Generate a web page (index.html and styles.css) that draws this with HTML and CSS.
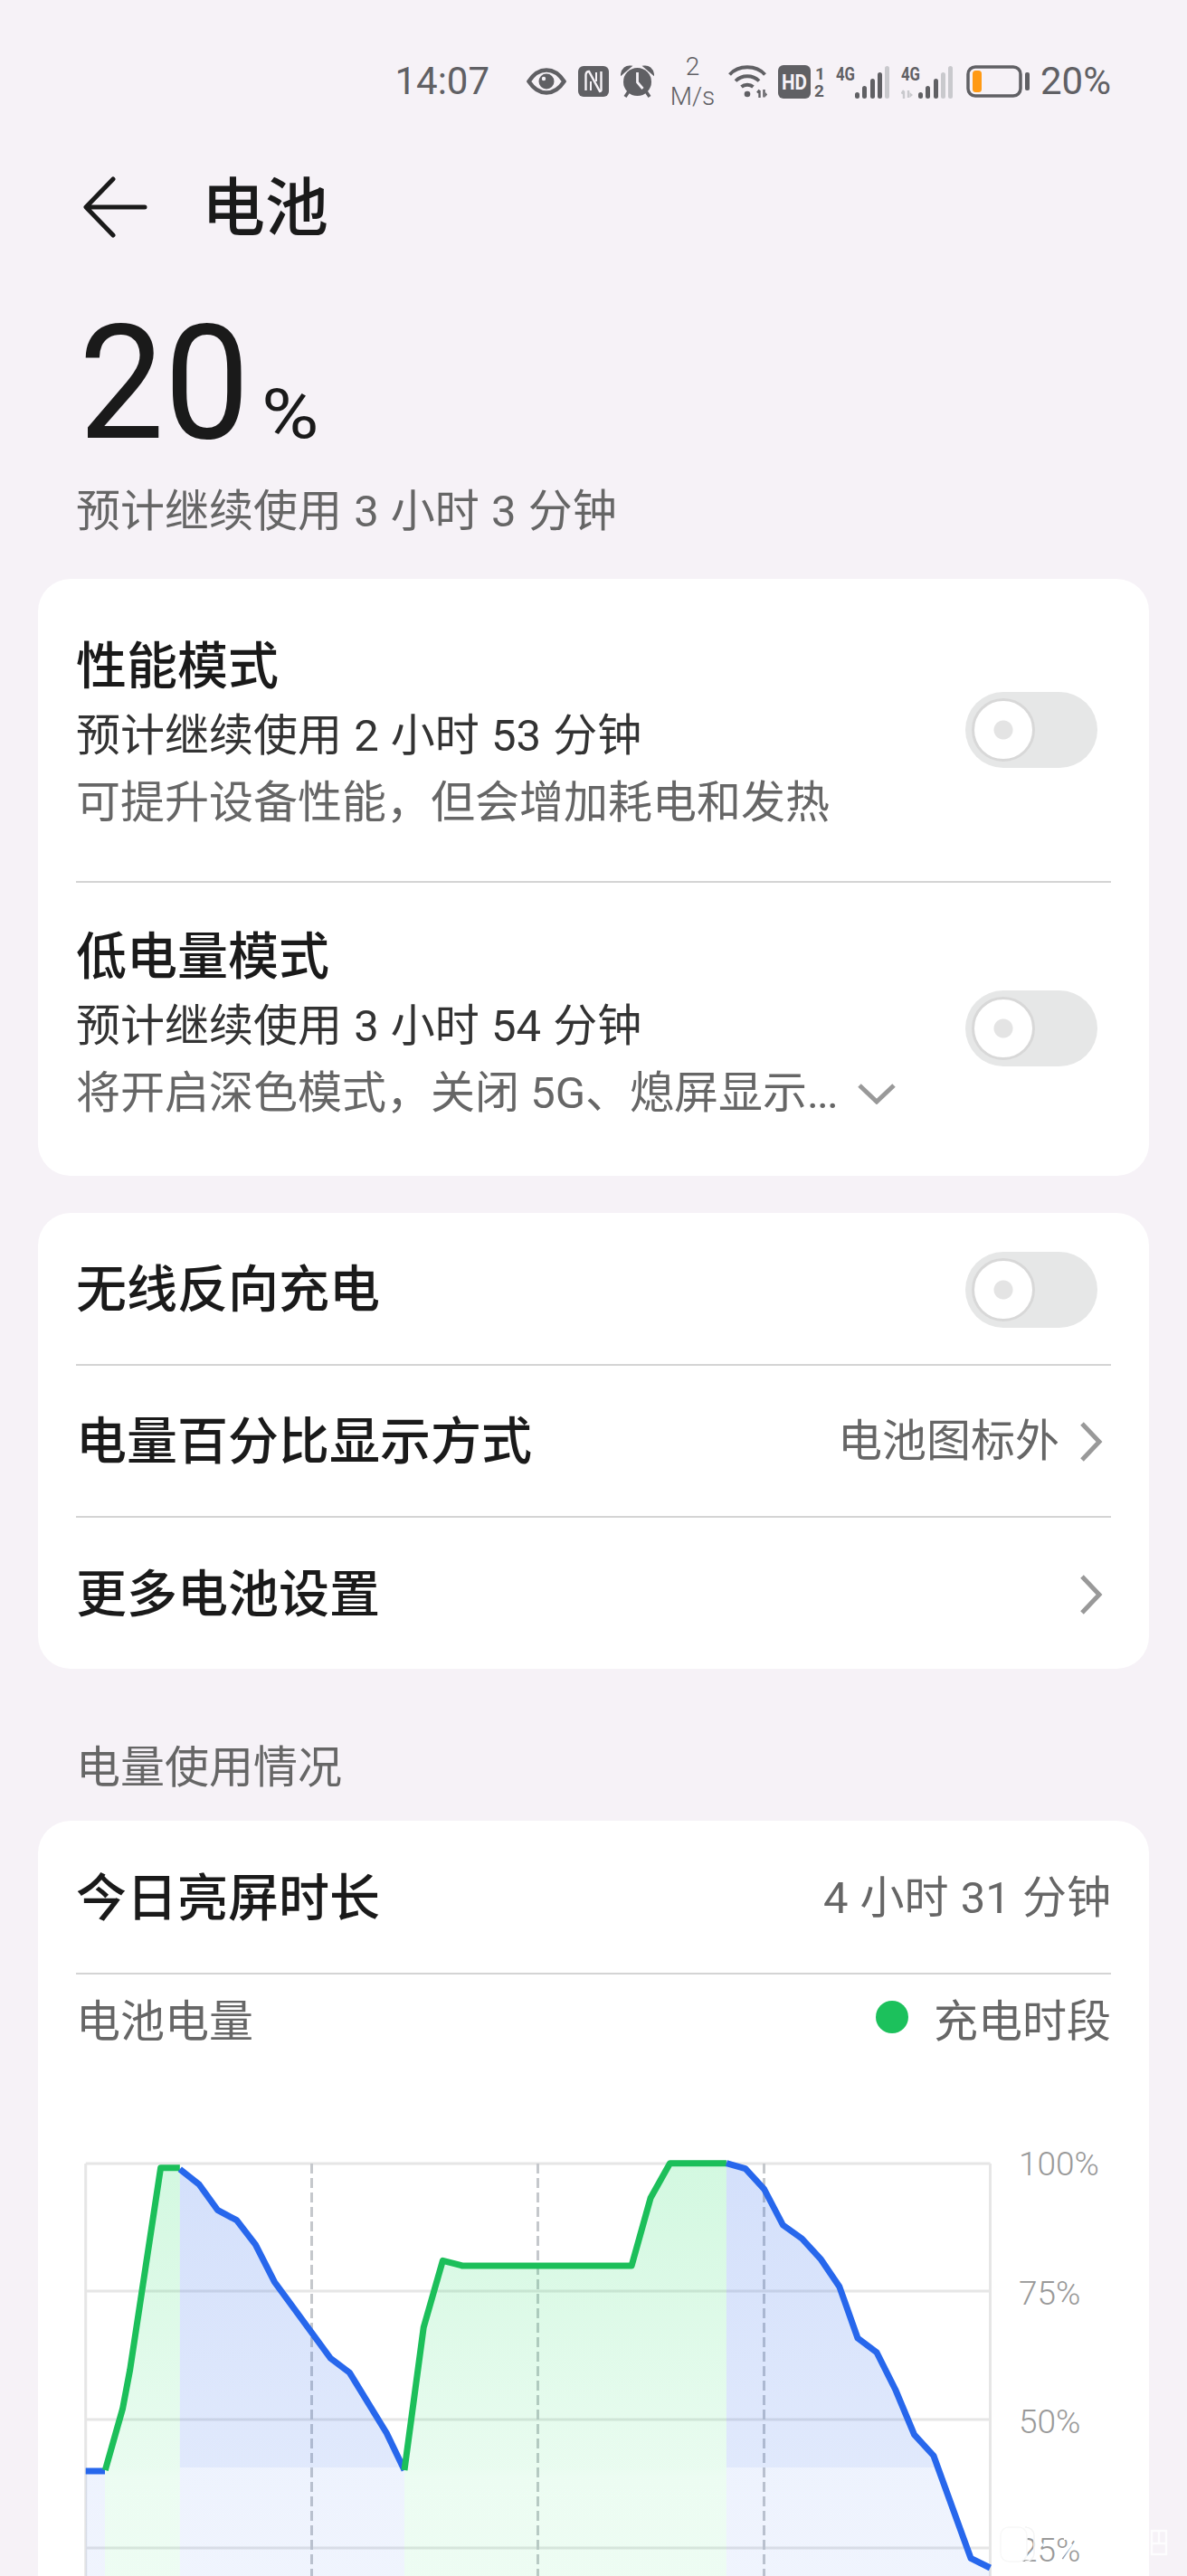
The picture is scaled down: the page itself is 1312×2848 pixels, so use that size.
FILE: index.html
```html
<!DOCTYPE html>
<html lang="zh-CN">
<head>
<meta charset="utf-8">
<title>电池</title>
<link rel="stylesheet" href="styles.css">
</head>
<body>
<div class="page">
  <div class="status">
    <span class="time">14:07</span>
    <svg class="ic gap-time" width="44" height="38" viewBox="0 0 44 38"><path d="M2.500 19C8 10.500 14 6.500 22 6.500S36 10.500 41.500 19C36 27.500 30 31.500 22 31.500S8 27.500 2.500 19Z" fill="none" stroke="#606064" stroke-width="4.500"/><circle cx="22" cy="19" r="8.500" fill="#606064"/><circle cx="19" cy="16" r="2.200" fill="#f6f2f7"/></svg>
    <svg class="ic gap-one" width="34" height="34" viewBox="0 0 34 34"><rect width="34" height="34" rx="6" fill="#606064"/><path d="M8.500 27V10C8.500 7 10 6 12 6L24 28C26 28 25.500 26 25.500 24V6" fill="none" stroke="#f6f2f7" stroke-width="2.400"/><path d="M14 27V17M20 7V17" fill="none" stroke="#f6f2f7" stroke-width="2"/></svg>
    <svg class="ic gap-one" width="37" height="36" viewBox="0 0 37 36"><path d="M1 10C2 4 6 1 11 1.500ZM36 10C35 4 31 1 26 1.500Z" fill="#606064" stroke="#606064" stroke-width="2"/><path d="M9 29L5 35M28 29L32 35" stroke="#606064" stroke-width="3.500" fill="none"/><circle cx="18.500" cy="18.500" r="15.500" fill="#606064"/><path d="M18.500 8V19L24.500 26" stroke="#f6f2f7" stroke-width="2.800" fill="none"/></svg>
    <div class="speed gap-speed"><span>2</span><span>M/s</span></div>
    <svg class="ic gap-wifi" width="43" height="38" viewBox="0 0 43 38"><path d="M1.500 11.500C11 .5 31 .5 40.500 11.500M8 18.500C15 11.500 27 11.500 34 18.500M14.500 25C18 22 24 22 27.500 25" fill="none" stroke="#606064" stroke-width="3.800"/><circle cx="21" cy="33" r="3.300" fill="#606064"/><path d="M34.500 37V29M32 31.500L34.500 28.500M39.500 28V36.500" stroke="#606064" stroke-width="2.400" fill="none"/><path d="M41 31L43 33.500L41 36Z" fill="#606064"/></svg>
    <svg class="ic" width="54" height="42" viewBox="0 0 54 42"><rect y="3" width="36" height="37" rx="6" fill="#606064"/><text x="18" y="30" class="hd" textLength="28" lengthAdjust="spacingAndGlyphs">HD</text><text x="41" y="19" class="tiny">1</text><text x="40" y="38" class="tiny">2</text></svg>
    <svg class="ic gap-sim" width="60" height="38" viewBox="0 0 60 38"><text x="0" y="18" class="g4" textLength="21" lengthAdjust="spacingAndGlyphs">4G</text><g fill="#606064"><rect x="21" y="31" width="5" height="7" rx="2.500"/><rect x="29" y="24" width="5" height="14" rx="2.500"/><rect x="38" y="16" width="5" height="22" rx="2.500"/><rect x="46" y="9" width="5" height="29" rx="2.500"/></g><rect x="54" y="2" width="5" height="36" rx="2.500" fill="#c9c9cd"/></svg>
    <svg class="ic" width="60" height="38" viewBox="0 0 60 38"><text x="0" y="18" class="g4" textLength="21" lengthAdjust="spacingAndGlyphs">4G</text><path d="M3 38V30M.5 32.500L3 29M8 29V37" stroke="#c9c9cd" stroke-width="2.400" fill="none"/><path d="M9.500 31L13 34L9.500 37Z" fill="#c9c9cd"/><g fill="#606064"><rect x="19" y="31" width="5" height="7" rx="2.500"/><rect x="27" y="24" width="5" height="14" rx="2.500"/><rect x="36" y="16" width="5" height="22" rx="2.500"/></g><rect x="44" y="9" width="5" height="29" rx="2.500" fill="#c9c9cd"/><rect x="52" y="2" width="5" height="36" rx="2.500" fill="#c9c9cd"/></svg>
    <svg class="ic" width="70" height="36" viewBox="0 0 70 36"><rect x="2" y="2" width="58" height="32" rx="8" fill="none" stroke="#606064" stroke-width="3.500"/><rect x="7" y="6" width="10" height="24" rx="3.500" fill="#ff9a14"/><rect x="65" y="8" width="5" height="20" rx="2" fill="#606064"/></svg>
    <span class="pct">20%</span>
  </div>

  <div class="appbar">
    <svg class="back" width="72" height="68" viewBox="0 0 72 68"><path d="M34 3L4 34L34 65M5 34H69" fill="none" stroke="#1a1a1a" stroke-width="5" stroke-linecap="round" stroke-linejoin="round"/></svg>
    <h1 class="title">电池</h1>
  </div>

  <div class="hero">
    <div class="level"><span class="level-num">20</span><span class="level-unit">%</span></div>
    <p class="hero-sub">预计继续使用 3 小时 3 分钟</p>
  </div>

  <section class="card card-modes">
    <div class="mode">
      <div class="mode-text">
        <div class="mode-title">性能模式</div>
        <div class="mode-time">预计继续使用 2 小时 53 分钟</div>
        <div class="mode-note">可提升设备性能，但会增加耗电和发热</div>
      </div>
      <div class="toggle toggle-a"><span class="thumb"></span></div>
    </div>
    <div class="mode mode-last">
      <div class="mode-text">
        <div class="mode-title">低电量模式</div>
        <div class="mode-time">预计继续使用 3 小时 54 分钟</div>
        <div class="mode-note"><span>将开启深色模式，关闭 5G、熄屏显示<span class="dots">...</span></span><svg class="down" width="44" height="24" viewBox="0 0 44 24"><path d="M3 3L22 21L41 3" fill="none" stroke="#999" stroke-width="5"/></svg></div>
      </div>
      <div class="toggle toggle-b"><span class="thumb"></span></div>
    </div>
  </section>

  <section class="card card-settings">
    <div class="row">
      <span class="row-label">无线反向充电</span>
      <div class="toggle"><span class="thumb"></span></div>
    </div>
    <div class="row">
      <span class="row-label">电量百分比显示方式</span>
      <span class="row-end"><span class="row-value">电池图标外</span><svg class="chev" width="26" height="46" viewBox="0 0 26 46"><path d="M3 3L22 23L3 43" fill="none" stroke="#999" stroke-width="5"/></svg></span>
    </div>
    <div class="row">
      <span class="row-label">更多电池设置</span>
      <svg class="chev" width="26" height="46" viewBox="0 0 26 46"><path d="M3 3L22 23L3 43" fill="none" stroke="#999" stroke-width="5"/></svg>
    </div>
  </section>

  <h2 class="section">电量使用情况</h2>

  <section class="card card-usage">
    <div class="usage-head">
      <span class="row-label">今日亮屏时长</span>
      <span class="row-value">4 小时 31 分钟</span>
    </div>
    <div class="usage-legend">
      <span class="legend-name">电池电量</span>
      <span class="legend-key"><i class="dot"></i>充电时段</span>
    </div>
    <svg class="chart" width="1228" height="468" viewBox="42 2380 1228 468">
      <defs>
        <linearGradient id="fb" gradientUnits="userSpaceOnUse" x1="0" y1="2392" x2="0" y2="2848">
          <stop offset="0" stop-color="#2563eb" stop-opacity=".2"/>
          <stop offset=".737" stop-color="#2563eb" stop-opacity=".14"/>
          <stop offset=".737" stop-color="#2563eb" stop-opacity=".08"/>
          <stop offset="1" stop-color="#2563eb" stop-opacity=".07"/>
        </linearGradient>
        <linearGradient id="fg" gradientUnits="userSpaceOnUse" x1="0" y1="2392" x2="0" y2="2848">
          <stop offset="0" stop-color="#22dd66" stop-opacity=".2"/>
          <stop offset=".737" stop-color="#22dd66" stop-opacity=".1"/>
          <stop offset=".76" stop-color="#22dd66" stop-opacity=".085"/>
          <stop offset="1" stop-color="#22dd66" stop-opacity=".08"/>
        </linearGradient>
      </defs>
      <g class="grid">
        <path d="M94.700 2392H1094.500M94.700 2533H1094.500M94.700 2675H1094.500M94.700 2817H1094.500M94.700 2392V2848M1094.500 2392V2848"/>
      </g>
      <path class="dash" d="M344.500 2392V2848M594.500 2392V2848M844.500 2392V2848"/>
      <path fill="url(#fb)" d="M94.700 2732H116V2848H94.700Z"/>
      <path fill="url(#fg)" d="M116 2732L135.500 2663.300L143.700 2620L177.600 2396.700H198.800V2848H116Z"/>
      <path fill="url(#fb)" d="M198.800 2396.700L220 2415L240.400 2443.300L261.600 2454.700L282.400 2481.700L303.300 2522.700L365.300 2607.300L386.500 2623.300L427.300 2690L447 2731V2848H198.800Z"/>
      <path fill="url(#fg)" d="M447 2731L468.200 2573.300L489.400 2499.300L511 2505H698.100L719.100 2430L740.500 2391.700H802.900V2848H447Z"/>
      <path fill="url(#fb)" d="M802.900 2391.700L823.900 2397.700L844.500 2420L865.400 2460L886.400 2475L906.900 2497.300L927.900 2528.300L948 2585L969 2600.700L989.600 2641.700L1010.500 2691.700L1031.900 2715L1073 2828.300L1094.400 2839V2848H802.900Z"/>
      <path class="line-b" d="M94.700 2732H116"/>
      <path class="line-g" d="M116.300 2731L135.500 2663.300L143.700 2620L177.600 2396.700H198.800"/>
      <path class="line-b" d="M198.800 2398.300L220 2415L240.400 2443.300L261.600 2454.700L282.400 2481.700L303.300 2522.700L365.300 2607.300L386.500 2623.300L427.300 2690L447 2731"/>
      <path class="line-g" d="M447 2731L468.200 2573.300L489.400 2499.300L511 2505H698.100L719.100 2430L740.500 2391.700H802.900"/>
      <path class="line-b" d="M802.900 2391.700L823.900 2397.700L844.500 2420L865.400 2460L886.400 2475L906.900 2497.300L927.900 2528.300L948 2585L969 2600.700L989.600 2641.700L1010.500 2691.700L1031.900 2715L1073 2828.300L1094.400 2839"/>
      <text x="1126" y="2405" class="axis">100%</text>
      <text x="1126" y="2548" class="axis">75%</text>
      <text x="1126" y="2690" class="axis">50%</text>
      <text x="1126" y="2832" class="axis">25%</text>
      <rect class="wm" x="1106" y="2794" width="29" height="38" rx="9"/>
      <path class="wm-edge" d="M1135 2794H1133C1139 2794 1143 2798 1143 2803V2823C1143 2828 1139 2832 1133 2832"/>
      <path class="wm-cut" d="M1146 2806L1152 2815M1176 2806H1194M1170 2830L1184 2812"/>
      <path class="wm-mark" d="M1273 2798H1289V2824H1273ZM1281 2798V2812M1273 2812H1289"/>
    </svg>
  </section>
</div>
</body>
</html>
```

FILE: styles.css
```css
* { box-sizing: border-box; }
html, body { margin: 0; padding: 0; }
body { background: #f6f2f7; font-family: Roboto, "Noto Sans CJK SC", sans-serif; color: #1a1a1a; }
.page { width: 1312px; height: 2848px; overflow: hidden; }

.status { display: flex; align-items: center; justify-content: flex-end; gap: 12px; height: 80px; margin-top: 50px; padding-right: 84px; color: #606064; }
.time, .pct { font-size: 42px; line-height: 1; }
.ic { display: block; flex: none; }
.gap-time { margin-left: 29px; }
.gap-one { margin-left: 1px; }
.gap-speed { margin-left: 6px; }
.gap-wifi { margin-left: 3px; }
.gap-sim { margin-left: -2px; }
.speed { display: flex; flex-direction: column; align-items: center; width: 49px; font-size: 28px; line-height: 33px; font-weight: 300; }
.hd { font: 700 24px Roboto, sans-serif; fill: #f6f2f7; text-anchor: middle; }
.tiny { font: 700 19px Roboto, sans-serif; fill: #606064; }
.g4 { font: 700 21px Roboto, sans-serif; fill: #606064; }

.appbar { display: flex; align-items: center; height: 198px; padding-left: 91px; }
.back { display: block; flex: none; }
.title { margin: 4px 0 0 60px; font-size: 70px; line-height: 80px; font-weight: 500; }

.hero { padding: 13px 0 0 87px; }
.level { display: flex; align-items: baseline; height: 166px; line-height: 166px; }
.level-num { display: inline-block; font-size: 176px; transform: scaleX(.955); transform-origin: left center; }
.level-unit { display: inline-block; margin-left: 4px; font-size: 76px; transform: scaleX(1.14); transform-origin: left center; }
.hero-sub { margin: 29px 0 0 -3px; font-size: 49px; line-height: 60px; color: #666; word-spacing: 1px; }

.card { width: 1228px; margin-left: 42px; background: #fff; border-radius: 36px; }
.card-modes { height: 660px; margin-top: 44px; padding: 64px 42px 0; }
.mode { display: flex; justify-content: space-between; align-items: flex-start; height: 272px; border-bottom: 2px solid #d4d4d4; }
.mode-last { height: auto; margin-top: 49px; border-bottom: 0; }
.mode-title { font-size: 56px; line-height: 66px; font-weight: 500; margin-bottom: 7px; }
.mode-time { font-size: 49px; line-height: 74px; color: #333; word-spacing: 1px; }
.mode-note { display: flex; align-items: center; font-size: 49px; line-height: 74px; color: #666; }
.dots { letter-spacing: -2px; }
.down { margin-left: 22px; }

.toggle { flex: none; position: relative; width: 146px; height: 84px; margin-right: 15px; background: #e6e7e7; border-radius: 42px; }
.toggle-a { margin-top: 61px; }
.toggle-b { margin-top: 70px; }
.thumb { position: absolute; left: 7px; top: 7px; width: 70px; height: 70px; border: 3px solid #d8d8d8; border-radius: 50%; background: radial-gradient(circle at center, #e4e4e4 0, #e4e4e4 10px, #fff 11px); }

.card-settings { margin-top: 41px; padding: 0 42px; }
.row { display: flex; justify-content: space-between; align-items: center; height: 168px; padding-top: 2px; border-top: 2px solid #d4d4d4; }
.row:first-child { border-top: 0; height: 167px; }
.row:last-child { height: 169px; }
.row-label { font-size: 56px; font-weight: 500; line-height: 66px; }
.row-end { display: flex; align-items: center; gap: 22px; }
.row-value { font-size: 49px; line-height: 60px; color: #666; word-spacing: 1px; }
.chev { display: block; margin-right: 9px; }

.section { margin: 80px 0 0 84px; font-size: 49px; line-height: 60px; font-weight: 400; color: #666; }

.card-usage { height: 900px; margin-top: 28px; }
.usage-head { display: flex; justify-content: space-between; align-items: center; height: 170px; margin: 0 42px; padding-top: 4px; border-bottom: 2px solid #d4d4d4; }
.usage-legend { display: flex; justify-content: space-between; align-items: center; height: 100px; margin: 0 42px; padding-bottom: 6px; font-size: 49px; color: #666; }
.legend-key { display: flex; align-items: center; gap: 28px; }
.dot { width: 36px; height: 36px; background: #1cc15c; border-radius: 50%; }

.chart { display: block; margin-top: 97px; overflow: visible; }
.grid path { fill: none; stroke: #e6e6e6; stroke-width: 3; }
.dash { fill: none; stroke: #c5c8cc; stroke-width: 3; stroke-dasharray: 11 5; }
.line-b, .line-g { fill: none; stroke-width: 7; stroke-linejoin: round; }
.line-b { stroke: #2767ec; }
.line-g { stroke: #1cbf5a; }
.axis { font: 300 37px Roboto, sans-serif; fill: #999; }
.wm { fill: #fff; stroke: #f8f8f8; stroke-width: 1.500; }
.wm-edge { fill: none; stroke: #f4f4f4; stroke-width: 1.500; }
.wm-cut { fill: none; stroke: #fff; stroke-width: 4; }
.wm-mark { fill: none; stroke: #fff; stroke-width: 2.500; opacity: .8; }
```
